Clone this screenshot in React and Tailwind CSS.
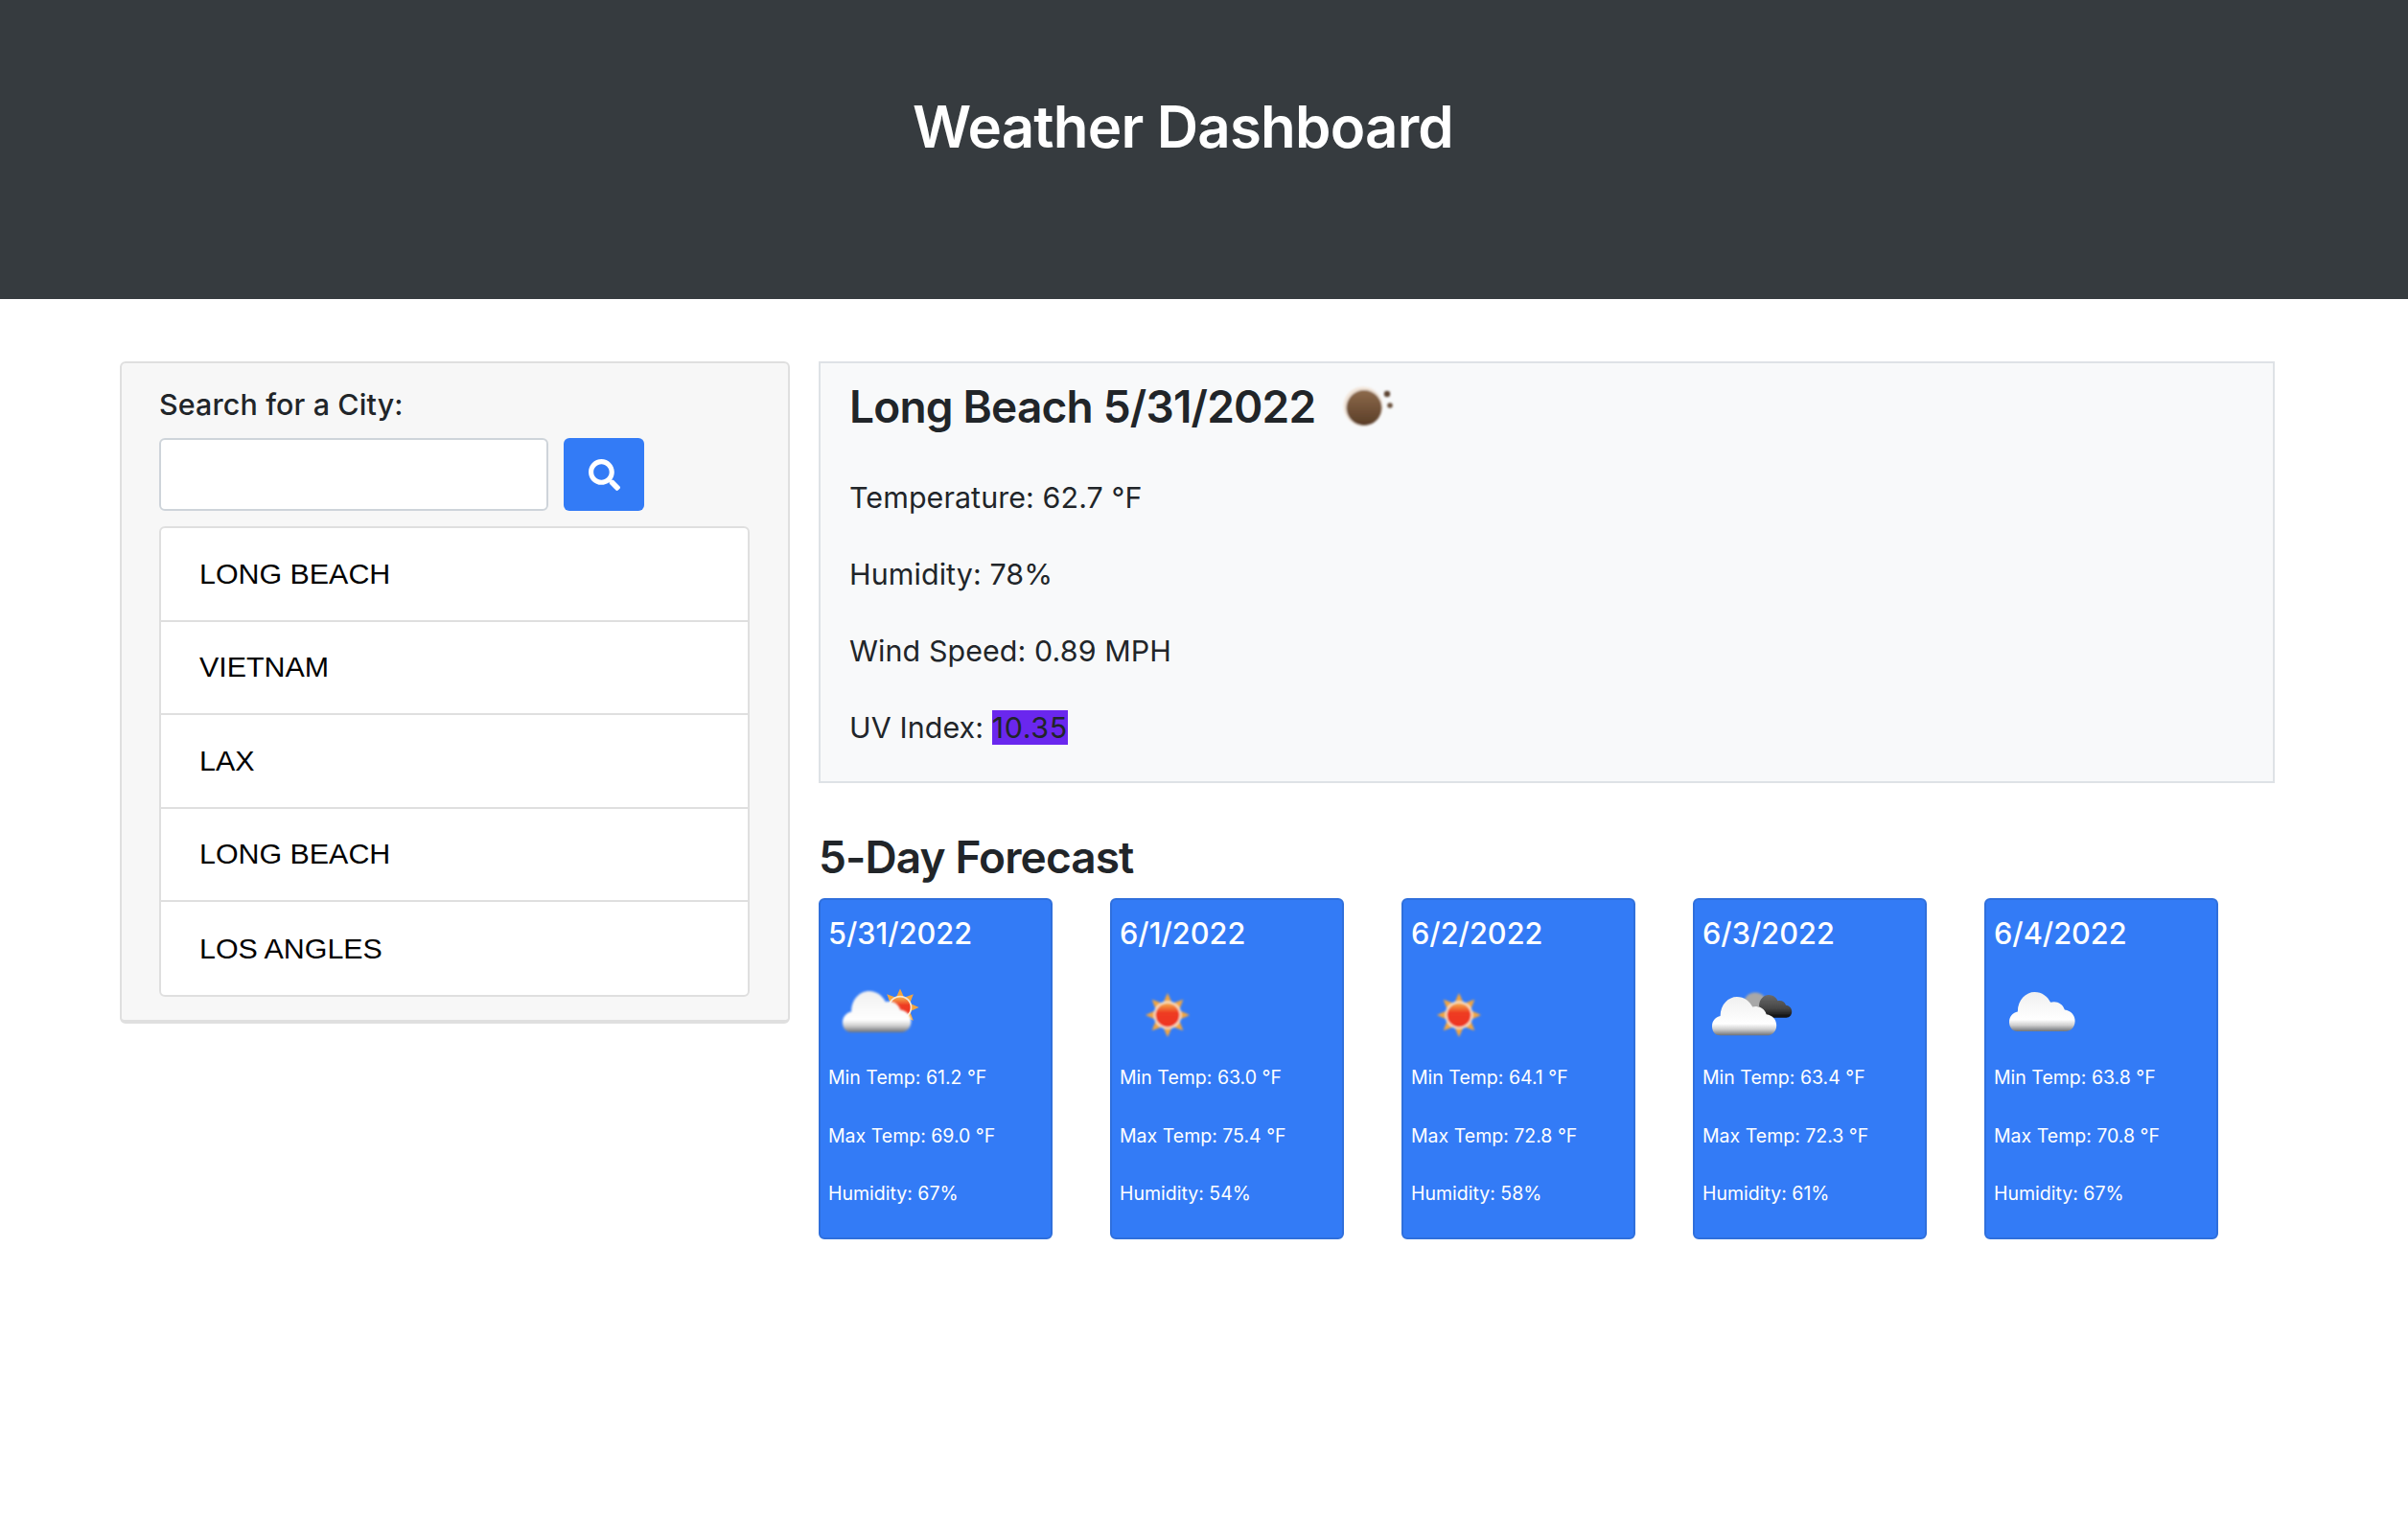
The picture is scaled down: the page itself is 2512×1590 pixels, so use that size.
import React from "react";
import { FaSearch } from "react-icons/fa";

const Defs = () => (
  <svg width="0" height="0" className="absolute">
    <defs>
      <linearGradient id="cloudW" x1="0" y1="0" x2="0" y2="1">
        <stop offset="0" stopColor="#f0f0f0" />
        <stop offset="0.7" stopColor="#ffffff" />
        <stop offset="0.84" stopColor="#d0d0d0" />
        <stop offset="1" stopColor="#6f7278" />
      </linearGradient>
      <linearGradient id="cloudD" x1="0" y1="0" x2="0" y2="1">
        <stop offset="0" stopColor="#6a6a6a" />
        <stop offset="0.6" stopColor="#454545" />
        <stop offset="1" stopColor="#0c0c0c" />
      </linearGradient>
      <linearGradient id="sunD" x1="0" y1="0" x2="0" y2="1">
        <stop offset="0" stopColor="#f5b04a" />
        <stop offset="0.4" stopColor="#ee3b22" />
        <stop offset="1" stopColor="#ee3522" />
      </linearGradient>
      <linearGradient id="moonD" x1="0" y1="0" x2="0" y2="1">
        <stop offset="0" stopColor="#8d6a4c" />
        <stop offset="1" stopColor="#5a3d27" />
      </linearGradient>
      <filter id="soft" x="-10%" y="-10%" width="120%" height="120%">
        <feGaussianBlur stdDeviation="0.8" />
      </filter>
    </defs>
  </svg>
);

const Cloud = ({ x, y, s, fill = "url(#cloudW)" }) => (
  <g transform={`translate(${x} ${y}) scale(${s})`} filter="url(#soft)">
    <path
      fill={fill}
      d="M9 44 C2 44 0 38 0 34 C0 28 4 24 9 23 C9 10 18 2 27 2 C35 2 41 7 44 13 C50 11 57 14 59 21 C66 22 70 27 70 33 C70 40 65 44 60 44 Z"
    />
  </g>
);

const Sun = ({ cx, cy, scale = 1 }) => {
  const pts = [];
  for (let i = 0; i < 8; i++) {
    const a = (i * Math.PI) / 4 - Math.PI / 2;
    const b = a + Math.PI / 8;
    pts.push(`${23 * Math.cos(a)},${23 * Math.sin(a)}`);
    pts.push(`${13 * Math.cos(b)},${13 * Math.sin(b)}`);
  }
  return (
    <g transform={`translate(${cx} ${cy}) scale(${scale})`} filter="url(#soft)">
      <polygon points={pts.join(" ")} fill="#f2a541" />
      <circle r="14.5" fill="#f8e6cf" />
      <circle r="12.5" fill="url(#sunD)" />
    </g>
  );
};

const Icon = ({ kind }) => (
  <svg width="100" height="100" viewBox="0 0 100 100" className="block">
    {kind === "sunCloud" && (
      <>
        <Sun cx={75} cy={42} scale={0.85} />
        <Cloud x={15} y={23} s={1.02} />
      </>
    )}
    {kind === "sun" && <Sun cx={50} cy={50} />}
    {kind === "moonCloud" && (
      <>
        <circle cx={55} cy={39} r={12.5} fill="#a8a8a8" filter="url(#soft)" />
        <Cloud x={54} y={28} s={0.56} fill="url(#cloudD)" />
        <Cloud x={10} y={29} s={0.96} />
      </>
    )}
    {kind === "cloud" && <Cloud x={16} y={24} s={0.98} />}
  </svg>
);

const cities = ["LONG BEACH", "VIETNAM", "LAX", "LONG BEACH", "LOS ANGLES"];

const forecast = [
  { d: "5/31/2022", i: "sunCloud", min: "61.2", max: "69.0", h: "67" },
  { d: "6/1/2022", i: "sun", min: "63.0", max: "75.4", h: "54" },
  { d: "6/2/2022", i: "sun", min: "64.1", max: "72.8", h: "58" },
  { d: "6/3/2022", i: "moonCloud", min: "63.4", max: "72.3", h: "61" },
  { d: "6/4/2022", i: "cloud", min: "63.8", max: "70.8", h: "67" },
];

export default function App() {
  return (
    <div className="min-h-[1590px] bg-white text-[#212529] font-['Inter','Liberation_Sans',sans-serif]">
      <Defs />
      <header className="h-[312px] bg-[#363b3f] pr-[44px] pt-[96px] text-center">
        <h1 className="text-[60px] leading-[72px] font-semibold text-white tracking-[-0.8px]">Weather Dashboard</h1>
      </header>

      <main className="flex items-start gap-[30px] pl-[125px] pt-[65px]">
        <aside className="w-[699px] h-[691px] shrink-0 rounded-[6px] border-2 border-b-[4px] border-[#dfdfdf] bg-[#f7f7f7] pl-[39px] pr-[40px]">
          <label className="block h-[78px] pt-[24px] text-[30.4px] leading-[38px] font-medium tracking-[0.15px]">Search for a City:</label>
          <div className="flex gap-[16px]">
            <input className="w-[406px] h-[76px] rounded-[6px] border-2 border-[#ced4da] bg-white" />
            <button className="flex w-[84px] h-[76px] items-center justify-center rounded-[6px] bg-[#337bf6] text-white">
              <FaSearch className="h-[33px] w-[33px]" />
            </button>
          </div>
          <ul className="mt-[16px] w-[616px] rounded-[6px] border-2 border-[#dfdfdf] bg-white">
            {cities.map((c, i) => (
              <li
                key={i}
                className={`flex h-[97.5px] last:h-[97px] items-center pl-[40px] font-['Liberation_Sans',sans-serif] text-[30.4px] text-black ${i < cities.length - 1 ? "border-b-2 border-[#dfdfdf]" : ""}`}
              >
                {c}
              </li>
            ))}
          </ul>
        </aside>

        <section className="w-[1519px] shrink-0">
          <div className="h-[440px] border-2 border-[#dee2e6] bg-[#f8f9fa] pl-[30px]">
            <div className="flex h-[89px] items-center">
              <h2 className="text-[46px] leading-[56px] font-semibold tracking-[-0.8px]">Long Beach 5/31/2022</h2>
              <svg width="60" height="60" viewBox="0 0 60 60" className="ml-[26px] shrink-0">
                <g filter="url(#soft)">
                  <circle cx="24" cy="30" r="20.5" fill="#f1e4d8" />
                  <circle cx="25" cy="31.5" r="18.5" fill="url(#moonD)" />
                  <circle cx="49" cy="17" r="3.2" fill="#5c4330" />
                  <circle cx="52" cy="29" r="2.8" fill="#6b513d" />
                </g>
              </svg>
            </div>
            <p className="mt-[32px] text-[30.4px] leading-[38.4px] tracking-[0.1px]">Temperature: 62.7 °F</p>
            <p className="mt-[41.6px] text-[30.4px] leading-[38.4px] tracking-[0.1px]">Humidity: 78%</p>
            <p className="mt-[41.6px] text-[30.4px] leading-[38.4px] tracking-[0.1px]">Wind Speed: 0.89 MPH</p>
            <p className="mt-[41.6px] text-[30.4px] leading-[38.4px] tracking-[0.1px]">
              UV Index: <span className="bg-[#6a27ee] tracking-[0.6px]">10.35</span>
            </p>
          </div>

          <h3 className="mt-[51px] h-[69px] text-[46px] leading-[52px] font-semibold tracking-[-0.9px]">5-Day Forecast</h3>

          <div className="flex gap-[60px]">
            {forecast.map((f) => (
              <article
                key={f.d}
                className="w-[244px] h-[356px] rounded-[6px] border-2 border-[#2f6fdc] bg-[#337bf6] pl-[8px] text-white"
              >
                <h5 className="mt-[16px] h-[54px] text-[30.7px] leading-[38px] font-medium">{f.d}</h5>
                <Icon kind={f.i} />
                <p className="text-[19.5px] leading-[30.7px]">Min Temp: {f.min} °F</p>
                <p className="mt-[30px] text-[19.5px] leading-[30.7px]">Max Temp: {f.max} °F</p>
                <p className="mt-[30px] text-[19.5px] leading-[30.7px]">Humidity: {f.h}%</p>
              </article>
            ))}
          </div>
        </section>
      </main>
    </div>
  );
}
